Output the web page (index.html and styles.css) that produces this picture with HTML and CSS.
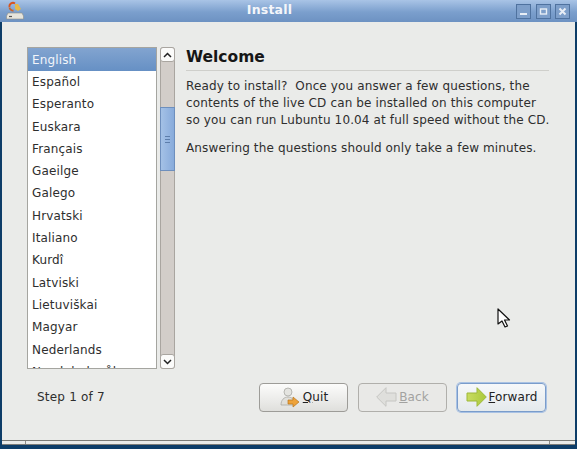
FILE: index.html
```html
<!DOCTYPE html>
<html lang="en">
<head>
<meta charset="utf-8">
<title>Install</title>
<link rel="stylesheet" href="styles.css">
</head>
<body>
<div class="window">
  <header class="titlebar">
    <svg class="app-icon" width="20" height="20" viewBox="0 0 20 20">
      <path d="M4.500 6a3.500 3.500 0 0 1 5.500-3.500" fill="none" stroke="#d9541e" stroke-width="1.800"/>
      <path d="M4.500 6.500a3.500 3.500 0 0 0 4 3" fill="none" stroke="#c8642a" stroke-width="1.800"/>
      <path d="M10 3l3 0 3 5-3 2-3-2z" fill="#e5b94a"/>
      <path d="M3 12h14l1.500 3v3h-17v-3z" fill="#e6e4dc" stroke="#8d8d86" stroke-width=".6"/>
      <path d="M4 15.500h3" stroke="#555" stroke-width="1.200"/>
    </svg>
    <div class="title">Install</div>
    <div class="win-buttons">
      <div class="win-btn"><svg width="9" height="9" viewBox="0 0 9 9"><rect x="1" y="6" width="7" height="2" fill="#e8eef6"/></svg></div>
      <div class="win-btn"><svg width="9" height="9" viewBox="0 0 9 9"><rect x="1.500" y="2" width="6" height="5" fill="none" stroke="#e8eef6" stroke-width="1.400"/></svg></div>
      <div class="win-btn"><svg width="9" height="9" viewBox="0 0 9 9"><path d="M1.500 1.500l6 6M7.500 1.500l-6 6" stroke="#e8eef6" stroke-width="2"/></svg></div>
    </div>
  </header>

  <main class="content">
    <div class="top">
      <div class="lang-panel">
        <ul class="lang-list">
          <li class="selected">English</li>
          <li>Español</li>
          <li>Esperanto</li>
          <li>Euskara</li>
          <li>Français</li>
          <li>Gaeilge</li>
          <li>Galego</li>
          <li>Hrvatski</li>
          <li>Italiano</li>
          <li>Kurdî</li>
          <li>Latviski</li>
          <li>Lietuviškai</li>
          <li>Magyar</li>
          <li>Nederlands</li>
          <li>Norsk bokmål</li>
        </ul>
        <div class="scrollbar">
          <div class="arrow arrow-up"><svg width="9" height="6" viewBox="0 0 9 6"><path d="M1 5l3.500-3.500L8 5" fill="none" stroke="#222" stroke-width="1.500"/></svg></div>
          <div class="track">
            <div class="thumb"><span class="grip"></span></div>
          </div>
          <div class="arrow arrow-down"><svg width="9" height="6" viewBox="0 0 9 6"><path d="M1 1l3.500 3.500L8 1" fill="none" stroke="#222" stroke-width="1.500"/></svg></div>
        </div>
      </div>
      <section class="welcome">
        <h1>Welcome</h1>
        <p>Ready to install?&nbsp; Once you answer a few questions, the<br>contents of the live CD can be installed on this computer<br>so you can run Lubuntu 10.04 at full speed without the CD.</p>
        <p>Answering the questions should only take a few minutes.</p>
      </section>
    </div>
    <footer class="actions">
      <div class="step">Step 1 of 7</div>
      <div class="buttons">
        <div class="btn">
          <svg width="22" height="22" viewBox="0 0 22 22">
            <circle cx="9" cy="6" r="4" fill="#e4e4e0" stroke="#a9a9a4" stroke-width=".8"/>
            <path d="M2 19c0-5 3-8 7-8s7 3 7 8z" fill="#e0dfda" stroke="#a9a9a4" stroke-width=".8"/>
            <path d="M9 14h5v-3l6 5-6 5v-3H9z" fill="#eda23a" stroke="#b9761c" stroke-width=".7"/>
          </svg>
          <span class="label"><u>Q</u>uit</span>
        </div>
        <div class="btn disabled">
          <svg width="21" height="20" viewBox="0 0 21 20">
            <path d="M.7 10L10 .7V6h10v8H10v5.300z" fill="#dfdfdc" stroke="#c6c6c3" stroke-width="1"/>
          </svg>
          <span class="label"><u>B</u>ack</span>
        </div>
        <div class="btn focused">
          <svg width="21" height="20" viewBox="0 0 21 20">
            <defs>
              <linearGradient id="fwd" x1="0" y1="0" x2="1" y2="0">
                <stop offset="0" stop-color="#c9dc62"/>
                <stop offset="1" stop-color="#a9c93a"/>
              </linearGradient>
            </defs>
            <path d="M20.300 10L11 .7V6H1v8h10v5.300z" fill="url(#fwd)" stroke="#9db83a" stroke-width="1"/>
          </svg>
          <span class="label"><u>F</u>orward</span>
        </div>
      </div>
    </footer>
  </main>
  <div class="statusbar"><div class="status-cell"></div><div class="status-main"></div><div class="status-cell-right"></div></div>
</div>
<svg class="cursor" width="14" height="21" viewBox="0 0 14 21">
  <path d="M1 1v15l4-3 3 6 2.500-1-3-6h5z" fill="#fff" stroke="#111" stroke-width="1.200" stroke-linejoin="round"/>
</svg>
</body>
</html>
```
FILE: styles.css
```css
* { box-sizing: border-box; }
html, body { margin: 0; padding: 0; }
body {
  width: 577px;
  height: 449px;
  overflow: hidden;
  position: relative;
  background: #0d3d68;
  font-family: "DejaVu Sans", sans-serif;
  font-size: 12px;
  color: #2e2e2e;
}
.window {
  margin: 0 2px;
  height: 445px;
  display: flex;
  flex-direction: column;
  background: #eaebe9;
}
.titlebar {
  height: 22px;
  flex: none;
  display: flex;
  align-items: center;
  position: relative;
  margin: 0 -2px;
  padding: 0 5px;
  background: linear-gradient(#a9c4e6, #7b9fcd 55%, #6d92c2);
}
.app-icon { flex: none; margin-top: -1px; }
.title {
  position: absolute;
  left: 0;
  right: 38px;
  top: 2px;
  line-height: 15px;
  text-align: center;
  color: #f4f6fa;
  font-weight: bold;
  font-size: 12.500px;
  letter-spacing: .2px;
}
.win-buttons {
  margin-left: auto;
  align-self: flex-start;
  display: flex;
  gap: 4.500px;
  margin-right: 2px;
  margin-top: 4px;
}
.win-btn {
  width: 15px;
  height: 15px;
  display: flex;
  align-items: center;
  justify-content: center;
  border: 1px solid #4f729f;
  background: #7e9fca;
}
.content {
  flex: 1;
  display: flex;
  flex-direction: column;
  padding: 25px 26px 0 25px;
  min-height: 0;
}
.top { display: flex; gap: 11px; }
.lang-panel { display: flex; gap: 3px; flex: none; }
.lang-list {
  list-style: none;
  margin: 0;
  padding: 0;
  width: 130px;
  height: 322px;
  overflow: hidden;
  background: #fff;
  border: 1px solid #a5a5a0;
  letter-spacing: .15px;
}
.lang-list li {
  height: 22.300px;
  line-height: 23px;
  padding-left: 4px;
  white-space: nowrap;
}
.lang-list li.selected {
  height: 23px;
  line-height: 24px;
  color: #f2f5fa;
  background: linear-gradient(#82a4d0, #6690c4);
}
.scrollbar {
  width: 15px;
  height: 322px;
  display: flex;
  flex-direction: column;
  background: #d2cdc9;
  border: 1px solid #a9a5a0;
  border-radius: 3px;
}
.arrow {
  height: 15px;
  flex: none;
  margin: -1px;
  display: flex;
  align-items: center;
  justify-content: center;
  background: #fbfbfa;
  border: 1px solid #a9a5a0;
  border-radius: 3px;
}
.arrow-up { margin-bottom: 0; }
.arrow-down { margin-top: 0; }
.track { flex: 1; padding-top: 45px; }
.thumb {
  height: 64px;
  margin: 0 -1px;
  display: flex;
  align-items: center;
  justify-content: center;
  background: linear-gradient(90deg, #a4c1e6, #88abdb);
  border: 1px solid #6e8fbd;
}
.grip {
  width: 5px;
  height: 7px;
  border-top: 1px solid #5d7eab;
  border-bottom: 1px solid #5d7eab;
  background: linear-gradient(#5d7eab, #5d7eab) center / 100% 1px no-repeat;
}
.welcome { flex: 1; min-width: 0; }
.welcome h1 {
  margin: 0 0 7px;
  height: 24px;
  padding-top: 0;
  font-size: 15.500px;
  line-height: 20px;
  font-weight: bold;
  color: #161616;
  border-bottom: 1px solid #cfcfcb;
}
.welcome p {
  margin: 0 0 10px;
  font-size: 12px;
  line-height: 17.200px;
  letter-spacing: .13px;
  white-space: nowrap;
}
.actions {
  display: flex;
  align-items: center;
  margin-top: 13px;
  height: 30px;
  padding-left: 10px;
}
.step { letter-spacing: .2px; }
.buttons {
  margin-left: auto;
  display: flex;
  gap: 10px;
  margin-right: 3px;
}
.btn {
  width: 89px;
  height: 29px;
  display: flex;
  align-items: center;
  justify-content: center;
  gap: 2px;
  border: 1px solid #9d9c98;
  border-radius: 4px;
  background: linear-gradient(#fcfcfb, #ebebe9 60%, #dfdfdc);
  color: #222;
  letter-spacing: .1px;
}
.btn.disabled {
  color: #a2a2a0;
  background: #e9e9e7;
  border-color: #b0afab;
}
.btn.focused {
  border: 1px solid #7a9ccb;
  box-shadow: 0 0 0 1px #a9c2e4;
  background: linear-gradient(#f6f8fa, #e4e9ec);
}
.statusbar {
  flex: none;
  height: 5px;
  display: flex;
  border-top: 1px solid #7c7c78;
  border-bottom: 1px solid #7c7c78;
  background: #eaebe9;
}
.status-cell { width: 24px; border-right: 1px solid #8c8c88; }
.status-main { flex: 1; }
.status-cell-right { width: 26px; border-left: 1px solid #8c8c88; }
.cursor { position: absolute; left: 497px; top: 308px; }
```
